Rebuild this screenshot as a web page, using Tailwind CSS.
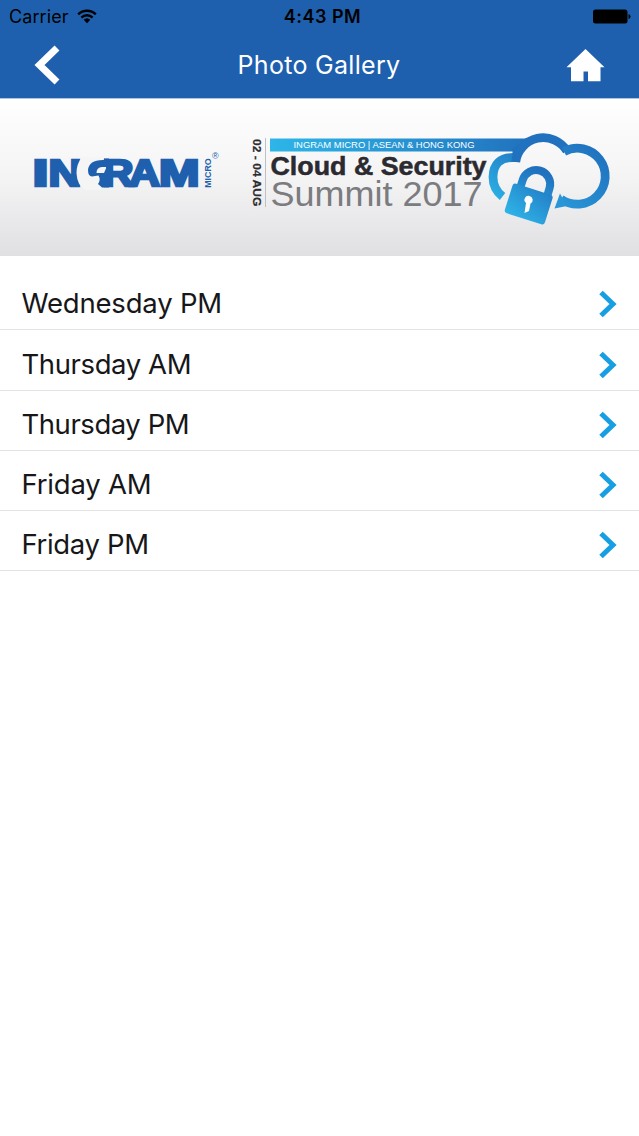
<!DOCTYPE html>
<html lang="en">
  <head>
    <meta charset="UTF-8" />
    <meta name="viewport" content="width=device-width, initial-scale=1.0" />
    <title>Photo Gallery</title>
    <script src="https://cdn.jsdelivr.net/npm/@tailwindcss/browser@4"></script>
  </head>
  <body class="min-h-screen bg-white font-['Inter','Liberation_Sans',sans-serif] text-[#17171a]">
    <header class="h-[99px] bg-[#1e60ae] border-b border-[#a9c4e4]">
      <!-- status bar -->
      <div class="grid grid-cols-3 items-center h-8 pl-[9px] pr-2 text-black">
        <div class="flex items-center gap-2">
          <span class="text-[18px] leading-8 tracking-[0.1px] pt-px">Carrier</span>
          <svg class="w-5 h-4 -mt-0.5" viewBox="0 0 20 16" fill="none" stroke="currentColor" stroke-width="2.4">
            <path d="M1.2 6.3a12.5 12.5 0 0 1 17.6 0" />
            <path d="M4.4 9.6a8 8 0 0 1 11.2 0" />
            <path d="M10 15.2L6.7 11.8a4.8 4.8 0 0 1 6.6 0z" fill="currentColor" stroke="none" />
          </svg>
        </div>
        <span class="text-center text-[18px] leading-8 font-semibold tracking-[0.5px] pl-[5px] pt-px">4:43 PM</span>
        <svg class="justify-self-end w-[38px] h-4" viewBox="0 0 38 16">
          <rect x="0" y="0.5" width="34.5" height="14" rx="2.5" />
          <path d="M35.500 5q2 .5 2 2.5t-2 2.500z" />
        </svg>
      </div>
      <!-- title bar -->
      <div class="flex items-center justify-between h-[66px] pl-[34px] pr-[34px]">
        <svg class="w-[27px] h-10" viewBox="0 0 27 40" fill="none" stroke="white" stroke-width="7">
          <path d="M23 3L5.500 20L23 37" />
        </svg>
        <h1 class="text-[25px] leading-8 tracking-[0.3px] text-white pl-[11px]">Photo Gallery</h1>
        <svg class="w-[39px] h-[34px]" viewBox="0 0 39 34" fill="white">
          <path d="M19.500 1L38.500 19.300H34.500V33.300H22V23.500H17.500V33.300H5V19.300H.5z" />
        </svg>
      </div>
    </header>

    <!-- event banner -->
    <svg class="block w-full h-[157px] bg-linear-to-b from-white via-[#f4f4f5] to-[#e0e0e2]" viewBox="0 99 639 157">
      <defs>
        <linearGradient id="bar" x1="0" x2="1">
          <stop offset="0" stop-color="#2db6e8" />
          <stop offset="1" stop-color="#2172be" />
        </linearGradient>
        <linearGradient id="cloud" gradientUnits="userSpaceOnUse" x1="490" y1="200" x2="530" y2="148">
          <stop offset="0" stop-color="#2cb3e7" />
          <stop offset="1" stop-color="#2172be" />
        </linearGradient>
        <linearGradient id="cloudEnd" gradientUnits="userSpaceOnUse" x1="560" y1="205" x2="605" y2="150">
          <stop offset="0" stop-color="#2996d7" />
          <stop offset="1" stop-color="#2070bd" />
        </linearGradient>
        <linearGradient id="lock" gradientUnits="userSpaceOnUse" x1="540" y1="170" x2="520" y2="222">
          <stop offset="0" stop-color="#2070bd" />
          <stop offset="1" stop-color="#2eb3e8" />
        </linearGradient>
      </defs>

      <g fill="#1e60ae" font-family="'Liberation Sans', sans-serif" font-weight="bold">
        <g font-size="36.500" stroke="#1e60ae" stroke-width="2.600">
          <text x="32.500" y="186" textLength="16" lengthAdjust="spacingAndGlyphs">I</text>
          <text x="48.500" y="186" textLength="33" lengthAdjust="spacingAndGlyphs">N</text>
          <text x="102.500" y="186" textLength="31" lengthAdjust="spacingAndGlyphs">R</text>
          <text x="129" y="186" textLength="31" lengthAdjust="spacingAndGlyphs">A</text>
          <text x="159" y="186" textLength="40.500" lengthAdjust="spacingAndGlyphs">M</text>
        </g>
        <!-- the G is a gap between its neighbours -->
        <path d="M82 157Q76.500 164 76.500 173Q77 186 86 190H101V157z" fill="#f5f5f6" />
        <path d="M110 158.500H104V160Q89 159.500 88 170Q88 176 92 176.500L98.500 175.500Q101 180 98 184L102 187.500H109V158.500z" />
        <path d="M96.500 173Q96.500 167.500 102 167H106V168.500L104 173z" fill="#f5f5f6" />
        <text transform="translate(211 187.800) rotate(-90)" font-size="9.200" textLength="29.500" lengthAdjust="spacingAndGlyphs">MICRO</text>
        <text x="212" y="158.500" font-size="9" font-weight="normal">®</text>
      </g>

      <g font-family="'Liberation Sans', sans-serif">
        <text transform="translate(253 139) rotate(90)" font-size="11.500" font-weight="bold" fill="#2d2d31" stroke="#2d2d31" stroke-width=".2" textLength="67.500" lengthAdjust="spacingAndGlyphs">02 - 04 AUG</text>
        <path d="M265.500 138V207" stroke="#bfc0c3" />
        <path d="M270 138.500H530L518 151.500H270z" fill="url(#bar)" />
        <text x="293.500" y="148.200" font-size="9" fill="white" textLength="181" lengthAdjust="spacingAndGlyphs">INGRAM MICRO | ASEAN &amp; HONG KONG</text>
        <text x="270.500" y="175" font-size="25" font-weight="bold" fill="#2b2a30" stroke="#2b2a30" stroke-width=".5" textLength="216" lengthAdjust="spacingAndGlyphs">Cloud &amp; Security</text>
        <text x="270.500" y="206" font-size="34.500" fill="#7b7c7f" textLength="212" lengthAdjust="spacingAndGlyphs">Summit 2017</text>
      </g>

      <g fill="none" stroke-width="8.800">
        <path d="M502.500 196.500Q493 189 493 177Q493.500 157 514 157.500H519" stroke="url(#cloud)" />
        <path d="M515.700 162A27.800 27.800 0 0 1 567 151" stroke="#2172be" />
        <path d="M516 161V150L528 141" stroke="#2172be" stroke-width="7" />
        <path d="M564 151.500A28 28 0 1 1 561 199" stroke="url(#cloudEnd)" />
      </g>
      <path d="M560 193.500L554.500 208.500L567 206z" fill="#2996d7" />
      <g>
        <path d="M519.500 190L522.700 180A14 14 0 0 1 549.600 188L546 200" fill="none" stroke="url(#lock)" stroke-width="8" />
        <rect x="-21" y="-15.500" width="42" height="31" rx="3" transform="translate(528.700 204) rotate(17.500)" fill="url(#lock)" />
        <path d="M529.500 196a4 4 0 0 1 1 7.500L529 211L524.500 213L526 203A4 4 0 0 1 529.500 196z" fill="white" />
      </g>
    </svg>

    <ul class="pt-[14.300px] text-[27.500px] leading-8 tracking-[-0.2px]">
      <li class="flex items-center justify-between h-[60.200px] pt-[9px] pl-[21.500px] pr-[22.500px] border-b border-[#e3e3e6]">
        <span class="-mt-[2px]">Wednesday PM</span>
        <svg class="w-[18px] h-7" viewBox="0 0 18 28" fill="none" stroke="#189fe3" stroke-width="5"><path d="M2 2.500L14 14L2 25.500" /></svg>
      </li>
      <li class="flex items-center justify-between h-[60.200px] pt-[9px] pl-[21.500px] pr-[22.500px] border-b border-[#e3e3e6]">
        <span class="-mt-[2px] tracking-[-0.400px]">Thursday AM</span>
        <svg class="w-[18px] h-7" viewBox="0 0 18 28" fill="none" stroke="#189fe3" stroke-width="5"><path d="M2 2.500L14 14L2 25.500" /></svg>
      </li>
      <li class="flex items-center justify-between h-[60.200px] pt-[9px] pl-[21.500px] pr-[22.500px] border-b border-[#e3e3e6]">
        <span class="-mt-[2px] tracking-[-0.450px]">Thursday PM</span>
        <svg class="w-[18px] h-7" viewBox="0 0 18 28" fill="none" stroke="#189fe3" stroke-width="5"><path d="M2 2.500L14 14L2 25.500" /></svg>
      </li>
      <li class="flex items-center justify-between h-[60.200px] pt-[9px] pl-[21.500px] pr-[22.500px] border-b border-[#e3e3e6]">
        <span class="-mt-[2px]">Friday AM</span>
        <svg class="w-[18px] h-7" viewBox="0 0 18 28" fill="none" stroke="#189fe3" stroke-width="5"><path d="M2 2.500L14 14L2 25.500" /></svg>
      </li>
      <li class="flex items-center justify-between h-[60.200px] pt-[9px] pl-[21.500px] pr-[22.500px] border-b border-[#e3e3e6]">
        <span class="-mt-[2px] tracking-[-0.350px]">Friday PM</span>
        <svg class="w-[18px] h-7" viewBox="0 0 18 28" fill="none" stroke="#189fe3" stroke-width="5"><path d="M2 2.500L14 14L2 25.500" /></svg>
      </li>
    </ul>
  </body>
</html>
